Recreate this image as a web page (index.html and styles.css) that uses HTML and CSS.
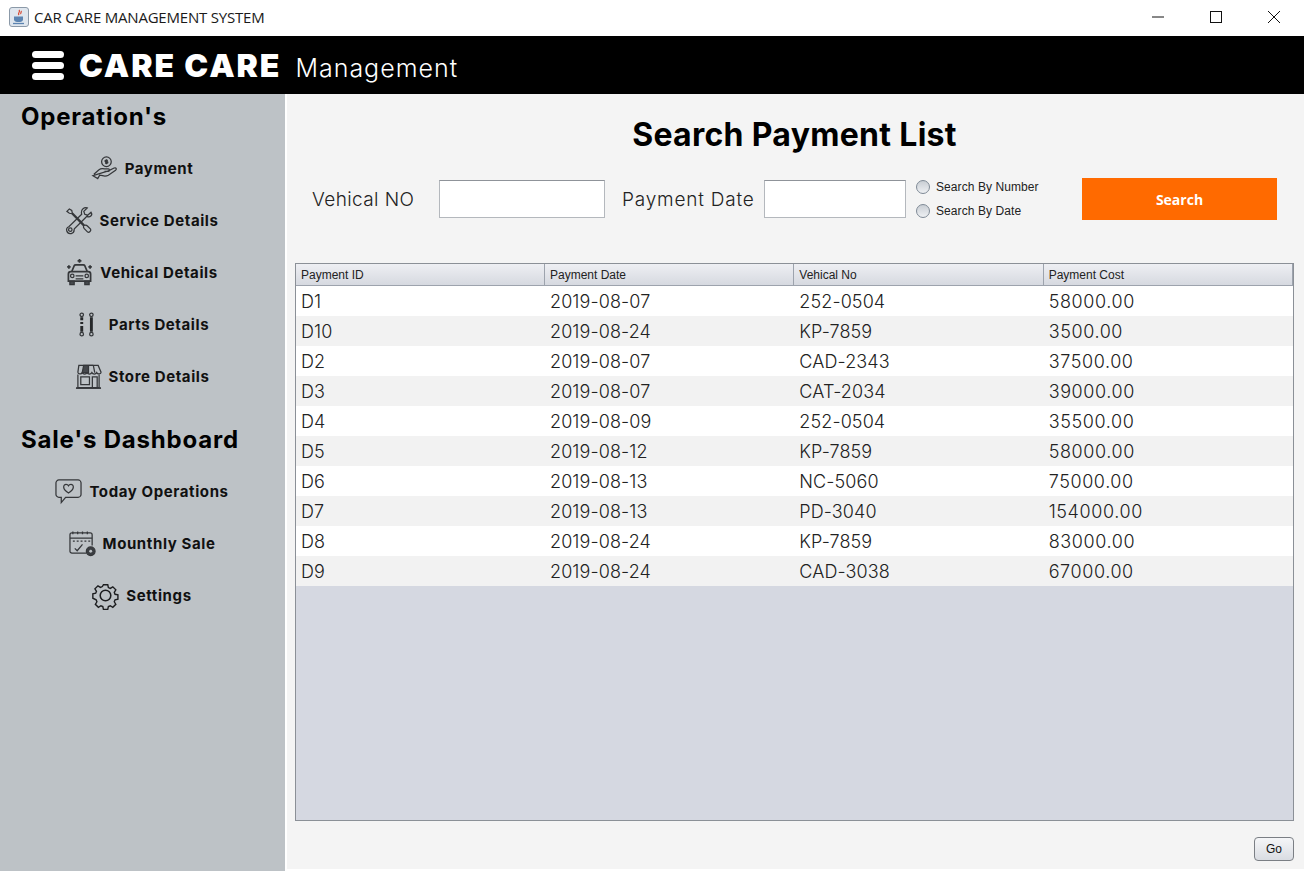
FILE: index.html
```html
<!DOCTYPE html>
<html>
  <head>
    <title>CAR CARE MANAGEMENT SYSTEM</title>
    <link rel="stylesheet" href="styles.css">
  </head>

  <body>
    <div class="titlebar">
      <svg class="app-icon" viewBox="0 0 20 20">
        <rect x="0.5" y="0.5" width="19" height="19" rx="2.5" fill="#dfe6ee" stroke="#8b99a8"/>
        <path d="M10 3c2 2-2 3 0 5M12 4c1 1-1 2 0 3" fill="none" stroke="#d8432b" stroke-width="1.2"/>
        <path d="M5 9.500h9v3c0 1.500-1.500 2.500-3 2.500H8c-1.500 0-3-1-3-2.500z" fill="#5c84b1"/>
        <path d="M4 16.500h11" stroke="#5c84b1" stroke-width="1.300"/>
      </svg>
      <span class="titlebar-text">CAR CARE MANAGEMENT SYSTEM</span>
      <div class="window-buttons">
        <svg viewBox="0 0 12 12"><path d="M0 6h12" stroke="#111" fill="none"/></svg>
        <svg viewBox="0 0 12 12"><rect x="0.500" y="0.500" width="11" height="11" stroke="#111" fill="none"/></svg>
        <svg viewBox="0 0 12 12"><path d="M0 0l12 12M12 0L0 12" stroke="#111" fill="none"/></svg>
      </div>
    </div>

    <div class="brandbar">
      <div class="burger"><span></span><span></span><span></span></div>
      <span class="brand-name">CARE CARE</span>
      <span class="brand-sub">Management</span>
    </div>

    <div class="layout">
      <div class="sidebar">
        <h2 class="side-title">Operation's</h2>
        <div class="side-item">
          <svg class="side-icon" viewBox="0 0 28 28">
            <circle cx="16" cy="7" r="5"/>
            <path d="M16 4.500v5M17.500 5.500h-2.200c-1 0-1 1.500 0 1.500h1.400c1 0 1 1.500 0 1.500h-2.200"/>
            <path d="M3 20l5-4.500c2-1.500 4-1.500 6-1h4c1.500 0 1.500 2.500 0 2.500h-4M18 16.500l6-3c2-.8 3 1 1.500 2.200L18 21c-2 1-4 1-6 .5L9 21l-2 3.500-5-3z"/>
          </svg>
          <span class="side-label">Payment</span>
        </div>
        <div class="side-item">
          <svg class="side-icon" viewBox="0 0 28 28">
            <path d="M2 4.500L4.500 2l2.500 1.500 .5 2.500 8 8 5 5c1-.3 2 0 3 1l3 3c1 1.500-1.500 4-3 3l-3.500-3.500c-.8-1-1-2-.8-3l-12-12.500-2.700-.5z"/>
            <path d="M27 5.500l-3.500 3-3-1-1-3L23 1c-3-1-6.500 1.500-6 5l.3 1.500L4 20.500c-4 1.500-2.500 8 2.500 7 2-.5 3-2 3-4l.2-.8 13-13c3 1.500 6.500-1 4.300-4.200z"/>
            <circle cx="5.500" cy="23.500" r="1.800"/>
          </svg>
          <span class="side-label">Service Details</span>
        </div>
        <div class="side-item">
          <svg class="side-icon" viewBox="0 0 28 28">
            <path class="solid-line" d="M6 13l2.500-6c.3-.6.8-1 1.500-1h8c.7 0 1.200.4 1.500 1L22 13"/>
            <path class="solid-line" d="M5 13h18c1.500 0 2.500 1 2.500 2.500V23h-23v-7.500C2.500 14 3.500 13 5 13z"/>
            <path class="filled" d="M4 23h4.500v3.500H4zM19.500 23H24v3.500h-4.500z"/>
            <path d="M10 20.500h8M10 17.500h8"/>
            <circle cx="6.500" cy="17.500" r="1.800"/>
            <circle cx="21.500" cy="17.500" r="1.800"/>
            <path class="solid-line" d="M14 0v4M12 2h4M3 6.500v3.500M1.200 8.200h3.600M25 6.500v3.500M23.200 8.200h3.600"/>
          </svg>
          <span class="side-label">Vehical Details</span>
        </div>
        <div class="side-item">
          <svg class="side-icon" viewBox="0 0 28 28">
            <circle cx="7" cy="4" r="1.800"/>
            <circle cx="7" cy="24" r="1.800"/>
            <circle cx="17" cy="4" r="1.800"/>
            <circle cx="17" cy="24" r="1.800"/>
            <path class="thick-line" d="M7 6.500v3M7 11.500v2M7 15.500v6M17 6.500v15"/>
          </svg>
          <span class="side-label">Parts Details</span>
        </div>
        <div class="side-item">
          <svg class="side-icon" viewBox="0 0 28 28">
            <path d="M4 2.500h20l3 7c0 2-3.500 2.500-4.500 .5-1 2-4 2-5 0-1 2-4 2-5 0-1 2-4 2-5 0-1 2-4.500 1.500-4.500-.5z"/>
            <path class="filled" d="M9 2.500h5v7.500H7.500zM19 2.500h-5M19 2.500l1.500 7.500"/>
            <path d="M3 12v13.500h22V12"/>
            <path d="M6 14.500h9v8H6zM18 14.500h5v11h-5z"/>
            <path class="solid-line" d="M1 26h26"/>
          </svg>
          <span class="side-label">Store Details</span>
        </div>

        <h2 class="side-title side-title-second">Sale's Dashboard</h2>
        <div class="side-item">
          <svg class="side-icon" viewBox="0 0 28 28">
            <path d="M4 2h20c1.500 0 3 1.500 3 3v12c0 1.500-1.500 3-3 3H11l-4.500 5.500V20H4c-1.500 0-3-1.500-3-3V5c0-1.500 1.500-3 3-3z"/>
            <path d="M14 15.500c-7-4-5.500-9-2.500-9 1 0 2 .5 2.500 1.500.5-1 1.500-1.500 2.500-1.500 3 0 4.500 5-2.500 9z"/>
          </svg>
          <span class="side-label">Today Operations</span>
        </div>
        <div class="side-item">
          <svg class="side-icon" viewBox="0 0 28 28">
            <path d="M18 24H3c-1 0-2-1-2-2V5c0-1 1-2 2-2h19c1 0 2 1 2 2v11"/>
            <path d="M1 8.500h23M4 1.500v3M9 1.500v3M14 1.500v3M19 1.500v3"/>
            <path d="M4 11.500h2M8 11.500h2M12 11.500h2M16 11.500h2M20 11.500h2"/>
            <path d="M6 19l2.500 2.500L14 15"/>
            <circle class="solid-dot" cx="22.500" cy="22" r="4.500"/>
            <circle class="dot-center" cx="22.500" cy="22" r="1.500"/>
          </svg>
          <span class="side-label">Mounthly Sale</span>
        </div>
        <div class="side-item">
          <svg class="side-icon gear-icon" viewBox="0 0 28 28">
            <path d="M11.500 1.500h5l.7 3.300 2.200.9 2.900-1.800 3.500 3.500-1.800 2.900.9 2.200 3.300.7v5l-3.300.7-.9 2.200 1.800 2.900-3.500 3.500-2.900-1.800-2.200.9-.7 3.300h-5l-.7-3.300-2.200-.9-2.900 1.800-3.500-3.500 1.800-2.900-.9-2.200L-.7 17v-5l3.300-.7.9-2.200-1.800-2.900 3.500-3.500 2.900 1.800 2.200-.9z" transform="translate(1.500 1.500) scale(.9)"/>
            <circle cx="14" cy="14" r="5.500"/>
          </svg>
          <span class="side-label">Settings</span>
        </div>
      </div>

      <div class="main">
        <h1 class="main-title">Search Payment List</h1>

        <div class="search-row">
          <label class="search-label label-number">Vehical NO</label>
          <input class="search-input input-number" type="text">
          <label class="search-label label-date">Payment Date</label>
          <input class="search-input input-date" type="text">
          <div class="radios">
            <div class="radio-row"><span class="radio"></span>Search By Number</div>
            <div class="radio-row"><span class="radio"></span>Search By Date</div>
          </div>
          <button class="search-button" type="button">Search</button>
        </div>

        <div class="table-pane">
          <table class="pay-table">
            <thead>
              <tr><th>Payment ID</th><th>Payment Date</th><th>Vehical No</th><th>Payment Cost</th></tr>
            </thead>
            <tbody>
              <tr><td>D1</td><td>2019-08-07</td><td>252-0504</td><td>58000.00</td></tr>
              <tr><td>D10</td><td>2019-08-24</td><td>KP-7859</td><td>3500.00</td></tr>
              <tr><td>D2</td><td>2019-08-07</td><td>CAD-2343</td><td>37500.00</td></tr>
              <tr><td>D3</td><td>2019-08-07</td><td>CAT-2034</td><td>39000.00</td></tr>
              <tr><td>D4</td><td>2019-08-09</td><td>252-0504</td><td>35500.00</td></tr>
              <tr><td>D5</td><td>2019-08-12</td><td>KP-7859</td><td>58000.00</td></tr>
              <tr><td>D6</td><td>2019-08-13</td><td>NC-5060</td><td>75000.00</td></tr>
              <tr><td>D7</td><td>2019-08-13</td><td>PD-3040</td><td>154000.00</td></tr>
              <tr><td>D8</td><td>2019-08-24</td><td>KP-7859</td><td>83000.00</td></tr>
              <tr><td>D9</td><td>2019-08-24</td><td>CAD-3038</td><td>67000.00</td></tr>
            </tbody>
          </table>
        </div>

        <div class="footer-row">
          <button class="go-button" type="button">Go</button>
        </div>
      </div>
    </div>
  </body>
</html>
```

FILE: styles.css
```css
* {
  box-sizing: border-box;
}

html,
body {
  height: 100%;
}

body {
  margin: 0;
  background: #ffffff;
  color: #000;
  font-family: 'Inter', 'Liberation Sans', sans-serif;
  display: flex;
  flex-direction: column;
  overflow: hidden;
}

.titlebar {
  height: 36px;
  display: flex;
  align-items: center;
  padding: 0 0 2px 9px;
  background: #fff;
}

.app-icon {
  width: 20px;
  height: 20px;
  margin-right: 5px;
}

.titlebar-text {
  font-family: 'Open Sans', sans-serif;
  font-size: 15px;
  letter-spacing: -0.2px;
  color: #1a1a1a;
}

.window-buttons {
  margin-left: auto;
  display: flex;
  gap: 46px;
  padding-right: 24px;
}

.window-buttons svg {
  width: 12px;
  height: 12px;
}

.brandbar {
  height: 58px;
  background: #000;
  color: #fff;
  display: flex;
  align-items: center;
  padding-left: 32px;
}

.burger {
  width: 32px;
  display: flex;
  flex-direction: column;
  gap: 4px;
  margin-right: 15px;
}

.burger span {
  height: 7px;
  border-radius: 3.5px;
  background: #fff;
}

.brand-name {
  font-size: 32px;
  font-weight: 900;
  letter-spacing: 1.95px;
  margin-right: 14px;
}

.brand-sub {
  font-size: 25px;
  font-weight: 300;
  letter-spacing: 1px;
  padding-top: 5px;
}

.layout {
  flex: 1;
  display: flex;
  min-height: 0;
}

.sidebar {
  width: 285px;
  background: #bdc2c6;
  padding-top: 7px;
}

.side-title {
  margin: 0 0 9px;
  padding-left: 21px;
  font-size: 24px;
  font-weight: 700;
  letter-spacing: 0.8px;
  line-height: 32px;
}

.side-title-second {
  margin-top: 22px;
}

.side-item {
  height: 52px;
  padding-left: 33px;
  display: grid;
  grid-template-columns: 1fr auto 1fr;
  align-items: center;
}

.side-label {
  grid-column: 2;
  font-size: 15px;
  font-weight: 700;
  letter-spacing: 0.6px;
  color: #111;
}

.side-icon {
  grid-column: 1;
  grid-row: 1;
  justify-self: end;
  width: 27px;
  height: 27px;
  margin-right: 7px;
  fill: none;
  stroke: #35373a;
  stroke-width: 1.3;
  overflow: visible;
}

.side-icon .solid-line {
  stroke-width: 1.8;
}

.side-icon .thick-line {
  stroke-width: 3;
  stroke: #26282a;
}

.side-icon .filled {
  fill: #45484c;
}

.side-icon .solid-dot {
  fill: #3b3e42;
}

.side-icon .dot-center {
  fill: #bdc2c6;
  stroke: none;
}

.gear-icon {
  stroke: #1c1d1f;
  stroke-width: 1.6;
}

.main {
  flex: 1;
  margin: 0 0 2px 2px;
  background: #f4f4f4;
  padding: 0 10px 0 8px;
  display: flex;
  flex-direction: column;
}

.main-title {
  margin: 21px 0 0;
  text-align: center;
  font-size: 32px;
  font-weight: 700;
  letter-spacing: 0.3px;
  line-height: 40px;
  color: #000;
}

.search-row {
  display: flex;
  align-items: center;
  height: 42px;
  margin-top: 23px;
}

.search-label {
  font-size: 19px;
  font-weight: 300;
  color: #222;
  letter-spacing: 0.4px;
  white-space: nowrap;
}

.label-number {
  width: 127px;
  margin-left: 17px;
}

.label-date {
  width: 142px;
  margin-left: 17px;
  letter-spacing: 0.8px;
}

.search-input {
  height: 38px;
  border: 1px solid #b4b8bd;
  border-top-color: #8f9399;
  background: #fff;
  outline: none;
}

.input-number {
  width: 166px;
}

.input-date {
  width: 142px;
}

.radios {
  width: 166px;
  margin-left: 10px;
  display: flex;
  flex-direction: column;
  gap: 6px;
}

.radio-row {
  display: flex;
  align-items: center;
  gap: 6px;
  height: 18px;
  font-family: 'Liberation Sans', sans-serif;
  font-size: 12px;
  letter-spacing: 0.08px;
  color: #222;
}

.radio {
  width: 14px;
  height: 14px;
  border-radius: 50%;
  border: 1px solid #7f8a96;
  background: linear-gradient(#c9ced4, #eef0f3);
}

.search-button {
  width: 195px;
  height: 42px;
  border: none;
  background: #ff6a00;
  color: #fff;
  font-family: 'Open Sans', sans-serif;
  font-size: 14px;
  font-weight: 700;
}

.table-pane {
  flex: 1;
  margin-top: 43px;
  border: 1px solid #8b9097;
  background: #d5d8e1;
}

.pay-table {
  width: 100%;
  table-layout: fixed;
  border-collapse: separate;
  border-spacing: 0;
}

.pay-table th {
  height: 22px;
  padding: 0 0 0 5px;
  text-align: left;
  font-family: 'Liberation Sans', sans-serif;
  font-size: 12px;
  font-weight: 400;
  color: #222;
  background: linear-gradient(#eeeff3, #d6d9e0);
  border-right: 1px solid #9da3ad;
  border-bottom: 1px solid #9da3ad;
}

.pay-table th:first-child {
  width: 249px;
}

.pay-table td {
  height: 30px;
  padding: 0 0 0 5px;
  font-size: 18px;
  font-weight: 300;
  letter-spacing: 0.1px;
  color: #222;
  background: #fff;
}

.pay-table td:nth-child(4) {
  letter-spacing: 0.6px;
}

.pay-table tbody tr:nth-child(even) td {
  background: #f2f2f2;
}

.footer-row {
  height: 48px;
  display: flex;
  justify-content: flex-end;
  align-items: flex-start;
  padding-top: 16px;
}

.go-button {
  width: 40px;
  height: 24px;
  padding: 0;
  border: 1px solid #7b7f85;
  border-radius: 4px;
  background: linear-gradient(#f5f6f8, #d9dce2);
  font-family: 'Liberation Sans', sans-serif;
  font-size: 12px;
  color: #111;
}
```
